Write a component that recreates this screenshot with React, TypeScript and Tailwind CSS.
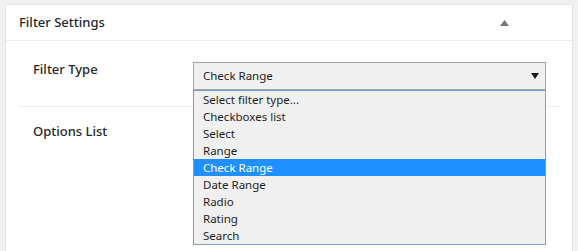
const options = [
  'Select filter type...',
  'Checkboxes list',
  'Select',
  'Range',
  'Check Range',
  'Date Range',
  'Radio',
  'Rating',
  'Search',
];

const selected = 'Check Range';

export default function App() {
  return (
    <div
      className="h-[251px] w-[578px] overflow-hidden bg-[#f1f1f1] pl-[5px] pr-[5px] pt-[4px] text-[#23282d]"
      style={{ fontFamily: '"Noto Sans", "Open Sans", sans-serif' }}
    >
      <div className="h-[300px] border border-[#e5e5e5] bg-white">
        <div className="flex h-[36px] items-center justify-between border-b border-[#eeeeee] pl-[13px] pr-[63px]">
          <h2 className="pt-[1px] text-[13px] font-medium">Filter Settings</h2>
          <svg width="9" height="6" viewBox="0 0 9 6" className="mt-[1px]">
            <path d="M0 6 L4.5 0 L9 6 Z" fill="#72777c" />
          </svg>
        </div>

        <div className="px-[12px]">
          <div className="flex h-[66px] border-b border-[#eeeeee]">
            <div className="w-[175px] pl-[15px] pt-[19px] text-[13px] font-medium">Filter Type</div>
            <div className="relative w-[353px] pt-[21px]">
              <div className="flex h-[28px] items-center justify-between border border-[#a6a6a6] bg-[#f0f0f0] pl-[9px] pr-[6px] text-[11.5px] text-[#1e1e1e]">
                <span>{selected}</span>
                <svg width="8" height="6" viewBox="0 0 8 6">
                  <path d="M0 0 L8 0 L4 6 Z" fill="#1a1a1a" />
                </svg>
              </div>
              <ul className="absolute left-0 top-[49px] z-10 w-[353px] border border-[#7a9cd3] bg-[#f0f0f0] text-[11.5px] text-[#1e1e1e]">
                {options.map((o) => (
                  <li
                    key={o}
                    className={
                      o === selected
                        ? 'flex h-[17px] items-center bg-[#1e90ff] pl-[9px] text-white'
                        : 'flex h-[17px] items-center pl-[9px]'
                    }
                  >
                    {o}
                  </li>
                ))}
              </ul>
            </div>
          </div>
          <div className="flex">
            <div className="w-[175px] pl-[15px] pt-[15px] text-[13px] font-medium">Options List</div>
          </div>
        </div>
      </div>
    </div>
  );
}
